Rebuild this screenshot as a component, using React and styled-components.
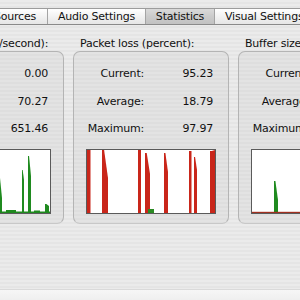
import React from 'react';
import styled, { createGlobalStyle } from 'styled-components';

const Global = createGlobalStyle`
  html, body { margin: 0; padding: 0; }
  body { width: 300px; height: 300px; overflow: hidden; }
`;

const Window = styled.div`
  width: 300px;
  height: 300px;
  overflow: hidden;
  display: flex;
  flex-direction: column;
  font-family: "DejaVu Sans", "Liberation Sans", sans-serif;
  font-size: 11px;
  letter-spacing: -0.2px;
  color: #111;
  background: repeating-linear-gradient(to bottom, #ebebeb 0 2px, #e5e5e5 2px 4px);
`;

const TabBar = styled.div`
  margin-top: 8px;
  height: 15px;
  display: flex;
  margin-left: -18px;
  border-top: 1px solid #9c9c9c;
  border-bottom: 1px solid #8a8a8a;
  background: linear-gradient(to bottom, #ffffff, #f2f2f2 50%, #e6e6e6);
`;

const Tab = styled.div`
  flex: ${p => (p.$w ? `0 0 ${p.$w}px` : '1 0 auto')};
  box-sizing: border-box;
  display: flex;
  align-items: center;
  justify-content: ${p => (p.$w ? 'center' : 'flex-start')};
  padding-left: ${p => (p.$w ? 0 : 10)}px;
  border-left: 1px solid #a4a4a4;
  white-space: nowrap;
  line-height: 15px;
  background: ${p => (p.$active ? 'linear-gradient(to bottom, #dadada, #cbcbcb 50%, #c2c2c2)' : 'transparent')};
`;

const Body = styled.div`
  flex: 1;
  display: flex;
  margin-left: -92px;
  gap: 9px;
  padding-top: 12px;
`;

const Group = styled.div`
  flex: 0 0 155px;
  display: flex;
  flex-direction: column;
`;

const GroupLabel = styled.div`
  line-height: 13px;
  padding-left: 7px;
  white-space: nowrap;
  height: 14px;
`;

const Box = styled.div`
  box-sizing: border-box;
  height: 173px;
  border: 1px solid #b4b4b4;
  border-bottom-color: #c8c8c8;
  border-radius: 7px;
  background: repeating-linear-gradient(to bottom, #e3e3e3 0 2px, #dedede 2px 4px);
  padding-top: 8px;
  display: flex;
  flex-direction: column;
`;

const Stats = styled.div`
  display: grid;
  grid-template-columns: 70px 69px;
  grid-auto-rows: 27.5px;
  align-items: center;
`;

const Label = styled.div`
  text-align: right;
  white-space: nowrap;
`;

const Value = styled.div`
  text-align: right;
`;

const ChartFrame = styled.div`
  margin: 6px 12px 0 12px;
  height: 65px;
  box-sizing: border-box;
  border: 1px solid #5a5a5a;
  background: #fff;
  overflow: hidden;
  svg { display: block; }
`;

const Footer = styled.div`
  height: 10px;
  border-top: 1px solid #dadada;
  background: linear-gradient(to bottom, #f6f6f6, #efefef);
`;

const H = 63;

function Chart({ color, spikes, base, baseColor }) {
  return (
    <ChartFrame>
      <svg width="128" height="63" viewBox="0 0 128 63">
        {spikes.map(([x, w, top, end], i) => (
          <polygon
            key={i}
            fill={color}
            points={`${x},${H} ${x},${top} ${x + w * 0.35},${top} ${x + w},${end ?? top} ${x + w},${H}`}
          />
        ))}
        {base && base.map(([x, w, h], i) => (
          <rect key={'b' + i} x={x} y={H - h} width={w} height={h} fill={baseColor} />
        ))}
      </svg>
    </ChartFrame>
  );
}

const groups = [
  {
    title: 'Bandwidth (kbit/second):',
    rows: [['Current:', '0.00'], ['Average:', '70.27'], ['Maximum:', '651.46']],
    color: '#1f8a1f',
    spikes: [[40, 3, 30, 55], [60, 2, 45, 58], [74, 6, 9, 48], [100, 2, 20, 30], [106, 3, 6, 26], [123, 4, 54, 56]],
    base: [[0, 128, 1.5], [84, 10, 3], [112, 6, 2.5]],
    baseColor: '#1f8a1f',
  },
  {
    title: 'Packet loss (percent):',
    rows: [['Current:', '95.23'], ['Average:', '18.79'], ['Maximum:', '97.97']],
    color: '#c9261a',
    spikes: [[0, 3.5, 0], [15, 6, 0, 28], [51, 3, 0], [58, 5, 3, 24], [77, 4, 3, 22], [102, 2.5, 1], [107, 3, 7, 20], [123, 5, 1, 0]],
    base: [[61, 6, 4]],
    baseColor: '#2a8a22',
  },
  {
    title: 'Buffer size (milliseconds):',
    rows: [['Current:', '0.00'], ['Average:', '3.12'], ['Maximum:', '46.00']],
    color: '#1f8a1f',
    spikes: [[22, 4, 31, 50]],
    base: [[0, 128, 1.2]],
    baseColor: '#a03020',
  },
];

export default function App() {
  return (
    <Window>
      <Global />
      <TabBar>
        <Tab $w={65}>Sources</Tab>
        <Tab $w={98}>Audio Settings</Tab>
        <Tab $w={69} $active>Statistics</Tab>
        <Tab>Visual Settings</Tab>
      </TabBar>
      <Body>
        {groups.map(g => (
          <Group key={g.title}>
            <GroupLabel>{g.title}</GroupLabel>
            <Box>
              <Stats>
                {g.rows.map(([l, v]) => (
                  <React.Fragment key={l}>
                    <Label>{l}</Label>
                    <Value>{v}</Value>
                  </React.Fragment>
                ))}
              </Stats>
              <Chart color={g.color} spikes={g.spikes} base={g.base} baseColor={g.baseColor} />
            </Box>
          </Group>
        ))}
      </Body>
      <Footer />
    </Window>
  );
}
